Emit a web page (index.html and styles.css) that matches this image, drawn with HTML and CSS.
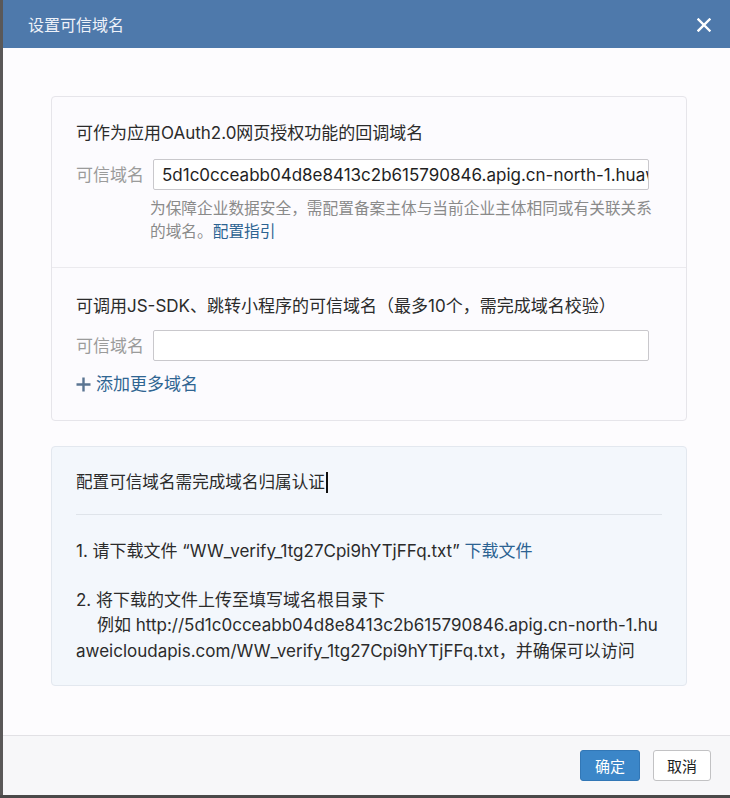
FILE: index.html
```html
<!DOCTYPE html>
<html lang="zh-CN">
<head>
<meta charset="utf-8">
<title>设置可信域名</title>
<link rel="stylesheet" href="styles.css">
</head>
<body>
<div class="screen">
  <div class="dialog">
    <div class="dlg-header">
      <span class="dlg-title">设置可信域名</span>
      <span class="dlg-close" aria-label="关闭">
        <svg width="14" height="14" viewBox="0 0 14 14"><path d="M1.5 1.5 L12.5 12.5 M12.5 1.5 L1.5 12.5" stroke="#ffffff" stroke-width="2.4" stroke-linecap="square" fill="none"/></svg>
      </span>
    </div>
    <div class="dlg-body">
      <div class="card">
        <div class="section">
          <div class="sec-title">可作为应用OAuth2.0网页授权功能的回调域名</div>
          <div class="field">
            <span class="field-label">可信域名</span>
            <div class="input"><span class="input-text">5d1c0cceabb04d8e8413c2b615790846.apig.cn-north-1.huaweicloudapis.com</span></div>
          </div>
          <div class="help">为保障企业数据安全，需配置备案主体与当前企业主体相同或有关联关系的域名。<a class="link">配置指引</a></div>
        </div>
        <div class="section section-2">
          <div class="sec-title">可调用JS-SDK、跳转小程序的可信域名（最多10个，需完成域名校验）</div>
          <div class="field field-2">
            <span class="field-label">可信域名</span>
            <div class="input"></div>
          </div>
          <a class="add-more"><svg class="plus" width="15" height="15" viewBox="0 0 15 15"><path d="M7.5 0.5 V14.5 M0.5 7.5 H14.5" stroke="#5b7592" stroke-width="2.4" fill="none"/></svg>添加更多域名</a>
        </div>
      </div>
      <div class="card verify">
        <div class="verify-title">配置可信域名需完成域名归属认证<span class="caret"></span></div>
        <div class="verify-divider"></div>
        <p class="step">1. 请下载文件 “WW_verify_1tg27Cpi9hYTjFFq.txt” <a class="link">下载文件</a></p>
        <p class="step step-2">2. 将下载的文件上传至填写域名根目录下<br><span class="indent">例如 http://5d1c0cceabb04d8e8413c2b615790846.apig.cn-north-1.huaweicloudapis.com/WW_verify_1tg27Cpi9hYTjFFq.txt，并确保可以访问</span></p>
      </div>
    </div>
    <div class="dlg-footer">
      <button class="btn btn-primary">确定</button>
      <button class="btn btn-default">取消</button>
    </div>
  </div>
</div>
</body>
</html>
```

FILE: styles.css
```css
*, *::before, *::after {
  box-sizing: border-box;
}
html, body {
  margin: 0;
  padding: 0;
}
body {
  width: 730px;
  height: 798px;
  overflow: hidden;
  background: #4a4949;
  font-family: "Inter", "Noto Sans CJK SC", sans-serif;
  font-size: 17px;
  color: #2b2b2b;
}
.screen {
  height: 795px;
  padding-left: 3px;
  background: #5a5858;
}
.dialog {
  height: 795px;
  display: flex;
  flex-direction: column;
  background: #fdfcfe;
}
.dlg-header {
  height: 48px;
  flex: none;
  background: #4e79ab;
  display: flex;
  align-items: center;
  justify-content: space-between;
  padding: 0 19px 0 25px;
}
.dlg-title {
  color: #eef2f9;
  font-family: "Noto Sans CJK SC", sans-serif;
  font-size: 16px;
  line-height: 20px;
}
.dlg-close {
  display: flex;
  width: 14px;
  height: 14px;
  margin-top: 1px;
}
.dlg-body {
  flex: 1;
  padding: 48px 43px 0 48px;
  border-bottom: 1px solid #e2e1e5;
}
.card {
  background: #fcfbfe;
  border: 1px solid #e6e5ea;
  border-radius: 4px;
}
.section {
  padding: 24px 21px 24px 24px;
}
.section-2 {
  border-top: 1px solid #ebeaee;
  padding-top: 26px;
  padding-bottom: 24px;
}
.sec-title {
  line-height: 24px;
  color: #2b2b2b;
}
.field {
  display: flex;
  align-items: center;
  margin-top: 14px;
  margin-right: 16px;
}
.field-2 {
  margin-top: 12px;
}
.field-label {
  width: 77px;
  flex: none;
  color: #9b9b9b;
  line-height: 24px;
}
.input {
  flex: 1;
  height: 31px;
  border: 1px solid #c9c8cc;
  border-radius: 2px;
  background: #ffffff;
  overflow: hidden;
  white-space: nowrap;
  display: flex;
  align-items: center;
  padding-left: 8px;
}
.input-text {
  color: #1f1f1f;
}
.help {
  margin-top: 7px;
  padding-left: 74px;
  font-size: 15.7px;
  line-height: 23px;
  color: #8a8a8a;
}
.link {
  color: #2c6392;
  text-decoration: none;
}
.add-more {
  display: inline-flex;
  align-items: center;
  margin-top: 11px;
  line-height: 24px;
  color: #2f6592;
}
.plus {
  margin-right: 5px;
  flex: none;
}
.verify {
  margin-top: 25px;
  background: #f3f7fc;
  border-color: #e3e8ef;
  padding: 23px 24px 21px 24px;
}
.verify-title {
  font-size: 16.6px;
  line-height: 24px;
  display: flex;
  align-items: center;
}
.caret {
  display: inline-block;
  width: 2px;
  height: 21px;
  background: #111;
  margin-left: 1px;
}
.verify-divider {
  height: 1px;
  background: #dfe4ea;
  margin-top: 20px;
}
.step {
  margin: 24px 0 0 0;
  line-height: 25.5px;
  word-break: break-all;
  color: #2b2b2b;
}
.step-2 {
  margin-top: 23px;
}
.indent {
  padding-left: 21px;
}
.dlg-footer {
  height: 59px;
  flex: none;
  background: #f7f7f9;
  display: flex;
  justify-content: flex-end;
  align-items: flex-start;
  padding: 14px 19px 0 0;
  gap: 13px;
}
.btn {
  height: 31px;
  font-family: "Noto Sans CJK SC", sans-serif;
  font-size: 15px;
  border-radius: 3px;
  padding: 0;
  cursor: pointer;
}
.btn-primary {
  width: 60px;
  background: #3b86c8;
  border: 1px solid #3277b6;
  color: #ffffff;
}
.btn-default {
  width: 58px;
  background: #ffffff;
  border: 1px solid #c2c2c4;
  color: #222;
}
```
